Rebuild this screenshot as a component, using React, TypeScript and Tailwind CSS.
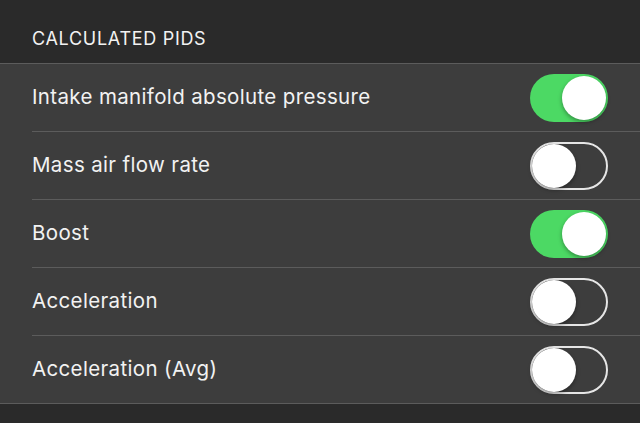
import { useState } from 'react'

const pids = [
  { name: 'Intake manifold absolute pressure', on: true },
  { name: 'Mass air flow rate', on: false },
  { name: 'Boost', on: true },
  { name: 'Acceleration', on: false },
  { name: 'Acceleration (Avg)', on: false },
]

function Toggle({ on, onClick }: { on: boolean; onClick: () => void }) {
  return (
    <button
      onClick={onClick}
      className={`relative h-[48px] w-[78px] rounded-full transition-colors ${
        on ? 'bg-[#4cd964]' : 'bg-transparent border-[2px] border-[#e6e6e6]'
      }`}
    >
      <span
        className={`absolute top-1/2 -translate-y-1/2 h-[44px] w-[44px] rounded-full bg-white shadow-[0_2px_4px_rgba(0,0,0,0.35)] ${
          on ? 'right-[2px]' : 'left-0'
        }`}
      />
    </button>
  )
}

export default function App() {
  const [state, setState] = useState(pids.map((p) => p.on))

  return (
    <div className="h-[423px] w-[640px] overflow-hidden bg-[#2a2a2a] font-['Inter',sans-serif] text-[#f2f2f2]">
      <div className="h-[63px] flex items-end pb-[11px] pl-[32px] text-[18px] tracking-[0.7px]">CALCULATED PIDS</div>
      <div className="border-t border-b border-[#5c5c5c] bg-[#3d3d3d]">
        {pids.map((p, i) => (
          <div key={p.name} className="pl-[32px]">
            <div
              className={`flex items-center justify-between pr-[32px] ${
                i < pids.length - 1 ? 'h-[68px] border-b border-[#5c5c5c]' : 'h-[67px]'
              }`}
            >
              <span className="text-[20.5px] tracking-[0.35px]">{p.name}</span>
              <Toggle on={state[i]} onClick={() => setState((s) => s.map((v, j) => (j === i ? !v : v)))} />
            </div>
          </div>
        ))}
      </div>
    </div>
  )
}
